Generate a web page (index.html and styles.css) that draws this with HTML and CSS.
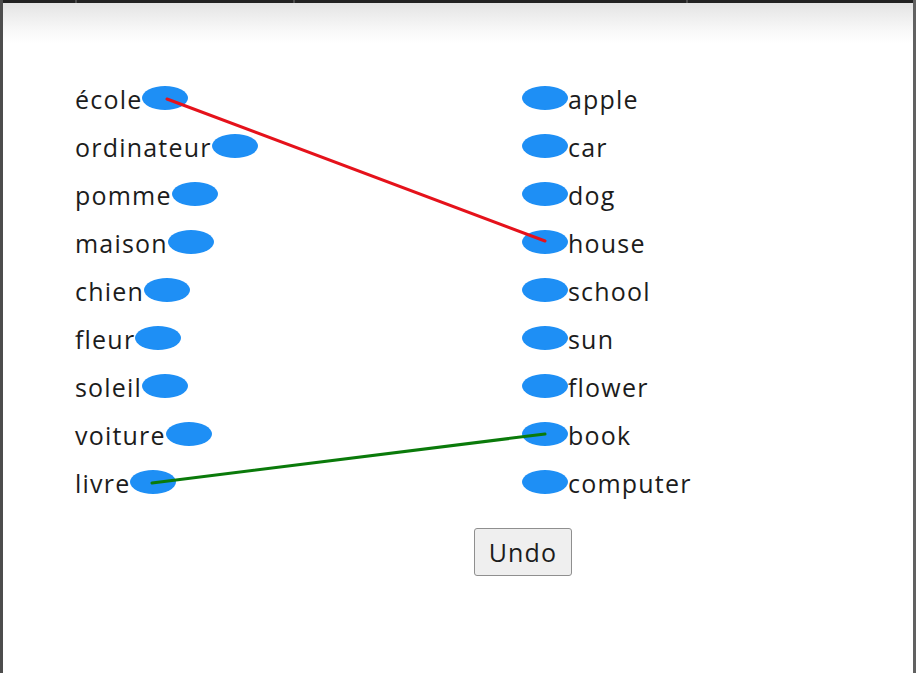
FILE: index.html
```html
<!DOCTYPE html>
<html lang="en">
<head>
    <meta charset="UTF-8">
    <meta name="viewport" content="width=device-width, initial-scale=1.0">
    <title>Word Match</title>
    <link rel="stylesheet" href="styles.css">
</head>
<body>
    <div class="window">
        <div class="tab-strip">
            <span class="tab" style="width: 74px"></span>
            <span class="tab" style="width: 218px"></span>
            <span class="tab" style="width: 393px"></span>
            <span class="tab tab-last"></span>
        </div>

        <div class="page">
            <div class="match-board">
                <div class="word-list word-list-left">
                    <div class="word">école<span class="dot"></span></div>
                    <div class="word">ordinateur<span class="dot"></span></div>
                    <div class="word">pomme<span class="dot"></span></div>
                    <div class="word">maison<span class="dot"></span></div>
                    <div class="word">chien<span class="dot"></span></div>
                    <div class="word">fleur<span class="dot"></span></div>
                    <div class="word">soleil<span class="dot"></span></div>
                    <div class="word">voiture<span class="dot"></span></div>
                    <div class="word">livre<span class="dot"></span></div>
                </div>

                <div class="word-list word-list-right">
                    <div class="word"><span class="dot"></span>apple</div>
                    <div class="word"><span class="dot"></span>car</div>
                    <div class="word"><span class="dot"></span>dog</div>
                    <div class="word"><span class="dot"></span>house</div>
                    <div class="word"><span class="dot"></span>school</div>
                    <div class="word"><span class="dot"></span>sun</div>
                    <div class="word"><span class="dot"></span>flower</div>
                    <div class="word"><span class="dot"></span>book</div>
                    <div class="word"><span class="dot"></span>computer</div>
                </div>

                <!-- connections drawn over the lists -->
                <svg class="links" width="910" height="440" viewBox="0 0 910 440">
                    <line x1="164" y1="24" x2="542" y2="166" stroke="#e5121b" stroke-width="3" stroke-linecap="round"/>
                    <line x1="149" y1="408" x2="542" y2="359" stroke="#0a7a0a" stroke-width="3" stroke-linecap="round"/>
                </svg>
            </div>

            <div class="actions">
                <button class="undo-btn">Undo</button>
            </div>
        </div>
    </div>
</body>
</html>
```

FILE: styles.css
```css
* {
    margin: 0;
    padding: 0;
    box-sizing: border-box;
}

body {
    background-color: #222;
    font-family: 'Open Sans', 'Noto Sans', sans-serif;
    color: #1c1c1c;
}

/* Window frame */
.window {
    width: 916px;
    height: 673px;
    display: flex;
    flex-direction: column;
    border-left: 3px solid #4d4d4d;
    border-right: 3px solid #616161;
}

.tab-strip {
    display: flex;
    height: 3px;
    background-color: #222;
}

.tab {
    height: 3px;
    border-right: 2px solid #4a4a4a;
}

.tab-last {
    flex: 1;
    border-right: none;
}

/* Page */
.page {
    flex: 1;
    background: linear-gradient(#e4e4e4, #fafafa 30px, #fff 40px);
    padding-top: 72px;
}

.match-board {
    position: relative;
    display: flex;
    padding-left: 72px;
}

.word-list {
    display: flex;
    flex-direction: column;
}

.word-list-left {
    width: 447px;
}

.word {
    display: flex;
    align-items: center;
    height: 48px;
    font-size: 25px;
    line-height: 48px;
    letter-spacing: 1.2px;
}

.dot {
    display: inline-block;
    width: 46px;
    height: 24px;
    border-radius: 50%;
    background-color: #1e8ff5;
    margin-top: -2px;
}

.links {
    position: absolute;
    top: 0;
    left: 0;
    pointer-events: none;
}

/* Undo */
.actions {
    padding: 21px 0 0 471px;
}

.undo-btn {
    width: 98px;
    height: 48px;
    font-family: inherit;
    font-size: 25px;
    letter-spacing: 1.2px;
    color: #1c1c1c;
    background-color: #efefef;
    border: 1px solid #8f8f8f;
    border-radius: 3px;
    cursor: pointer;
}

.undo-btn:hover {
    background-color: #e5e5e5;
}
```
